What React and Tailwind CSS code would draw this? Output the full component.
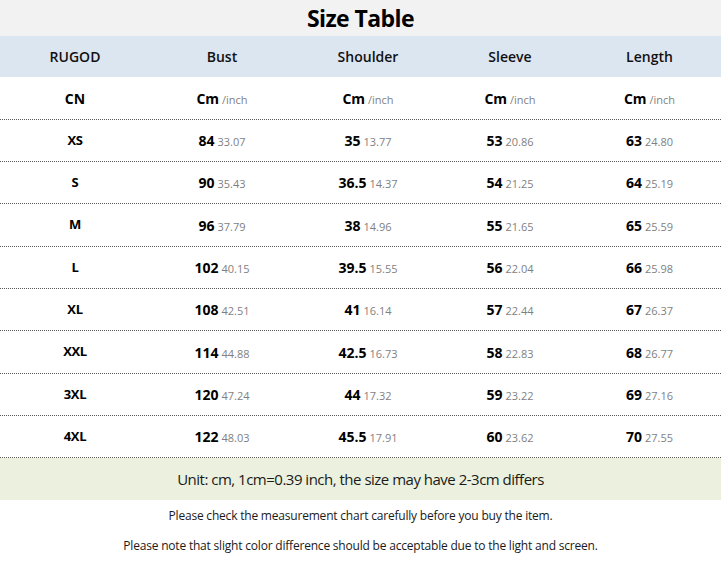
import React from "react";

const rows = [
  ["XS", ["84", "33.07"], ["35", "13.77"], ["53", "20.86"], ["63", "24.80"]],
  ["S", ["90", "35.43"], ["36.5", "14.37"], ["54", "21.25"], ["64", "25.19"]],
  ["M", ["96", "37.79"], ["38", "14.96"], ["55", "21.65"], ["65", "25.59"]],
  ["L", ["102", "40.15"], ["39.5", "15.55"], ["56", "22.04"], ["66", "25.98"]],
  ["XL", ["108", "42.51"], ["41", "16.14"], ["57", "22.44"], ["67", "26.37"]],
  ["XXL", ["114", "44.88"], ["42.5", "16.73"], ["58", "22.83"], ["68", "26.77"]],
  ["3XL", ["120", "47.24"], ["44", "17.32"], ["59", "23.22"], ["69", "27.16"]],
  ["4XL", ["122", "48.03"], ["45.5", "17.91"], ["60", "23.62"], ["70", "27.55"]],
];

const cols = "grid grid-cols-[150px_144px_148px_136px_143px]";

const Cell = ({ cm, inch }) => (
  <div className="flex items-baseline justify-center gap-[3px]">
    <span className="text-[14px] font-bold text-black">{cm}</span>
    <span className="text-[11px] text-[#7f7f7f]">{inch}</span>
  </div>
);

const App = () => {
  return (
    <div
      className="w-[721px] h-[566px] bg-white overflow-hidden"
      style={{ fontFamily: "'Open Sans', 'Noto Sans', sans-serif" }}
    >
      <div className="h-[36px] bg-[#f2f2f2] flex items-center justify-center">
        <h1 className="text-[23px] font-bold text-black tracking-tight">Size Table</h1>
      </div>

      <div className={`${cols} h-[41px] bg-[#dce6f1] items-center text-[14px] font-semibold text-[#111]`}>
        <div className="text-center">RUGOD</div>
        <div className="text-center">Bust</div>
        <div className="text-center">Shoulder</div>
        <div className="text-center">Sleeve</div>
        <div className="text-center">Length</div>
      </div>

      <div className={`${cols} h-[43px] items-center border-b border-dotted border-[#555]`}>
        <div className="text-center text-[14px] font-bold">CN</div>
        {[0, 1, 2, 3].map((i) => (
          <Cell key={i} cm="Cm" inch="/inch" />
        ))}
      </div>

      {rows.map((r, idx) => (
        <div
          key={r[0]}
          className={`${cols} ${idx % 3 === 2 ? "h-[43px]" : "h-[42px]"} items-center border-b border-dotted border-[#555]`}
        >
          <div className="text-center text-[13px] font-bold tracking-tight">{r[0]}</div>
          {r.slice(1).map((c, i) => (
            <Cell key={i} cm={c[0]} inch={c[1]} />
          ))}
        </div>
      ))}

      <div className="h-[42px] bg-[#ebf1de] flex items-center justify-center">
        <p className="text-[15px] text-[#1a1a1a] tracking-[-0.5px]">
          Unit: cm, 1cm=0.39 inch, the size may have 2-3cm differs
        </p>
      </div>

      <div className="flex flex-col items-center pt-[7px] gap-[12px] text-[12px] text-[#1a1a1a] tracking-[-0.2px]">
        <p>Please check the measurement chart carefully before you buy the item.</p>
        <p>Please note that slight color difference should be acceptable due to the light and screen.</p>
      </div>
    </div>
  );
};

export default App;
